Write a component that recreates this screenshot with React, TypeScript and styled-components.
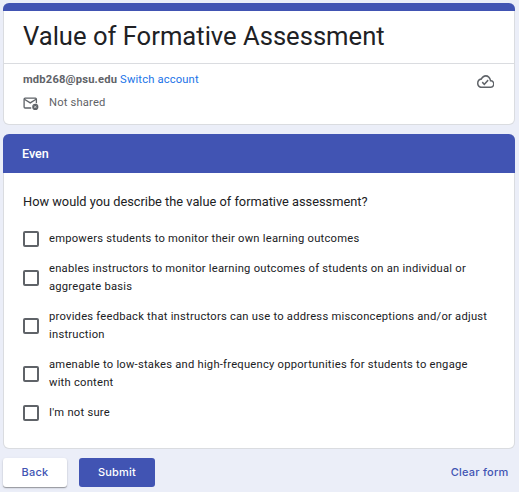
import React from "react";
import styled, { createGlobalStyle } from "styled-components";

const GlobalStyle = createGlobalStyle`
  * { box-sizing: border-box; }
  html, body { margin: 0; padding: 0; background: #ebeef8; }
  body { font-family: Roboto, "Liberation Sans", sans-serif; color: #202124; overflow: hidden; }
`;

const Page = styled.main`
  width: 519px;
  height: 492px;
  padding: 3px 4px 0 3px;
  display: flex;
  flex-direction: column;
  background: #ebeef8;
`;

const Card = styled.section<{ $height: number }>`
  height: ${(p) => p.$height}px;
  background: linear-gradient(#fff, #fff) padding-box, #dadce0 border-box;
  border: 1px solid transparent;
  border-top: 0;
  border-radius: 6px;
  flex: none;
`;

const Accent = styled.div`
  height: 8px;
  margin: 0 -1px;
  border-radius: 6px 6px 0 0;
  background: #4154b3;
`;

const Title = styled.h1`
  margin: 0;
  height: 53px;
  padding: 9px 0 0 19px;
  border-bottom: 1px solid #dadce0;
  font-size: 25.6px;
  font-weight: 400;
  line-height: 32px;
  white-space: nowrap;
`;

const Account = styled.div`
  display: flex;
  justify-content: space-between;
  padding: 7px 20px 0 19px;
  font-size: 11.2px;
  line-height: 18px;
  letter-spacing: 0.18px;
  color: #5f6368;
`;

const Email = styled.strong`
  font-weight: 700;
  letter-spacing: 0.17px;
`;

const Switch = styled.a`
  color: #1a73e8;
  letter-spacing: 0.16px;
`;

const Shared = styled.div`
  display: flex;
  align-items: center;
  gap: 10px;
  margin-top: 5px;
`;

const CloudSlot = styled.div`
  padding-top: 4px;
  display: flex;
  align-items: flex-start;
`;

const SectionHeader = styled.h2`
  margin: 0 -1px;
  height: 39px;
  padding: 1px 0 0 19px;
  border-radius: 6px 6px 0 0;
  background: #4154b3;
  color: #fff;
  font-size: 12.6px;
  font-weight: 500;
  line-height: 38px;
`;

const Question = styled.p`
  margin: 0;
  padding: 19px 0 18px 19px;
  font-size: 12.8px;
  line-height: 20px;
`;

const Options = styled.div`
  display: flex;
  flex-direction: column;
  gap: 12px;
  padding-left: 19px;
`;

const Option = styled.label`
  display: flex;
  align-items: center;
  gap: 10px;
  font-size: 11.2px;
  line-height: 18px;
  letter-spacing: 0.24px;
`;

const Checkbox = styled.input`
  appearance: none;
  flex: none;
  width: 16px;
  height: 16px;
  margin: 0;
  border: 2px solid #5f6368;
  border-radius: 2px;
`;

const OptionText = styled.span`
  width: 450px;
  white-space: pre-line;
`;

const Actions = styled.footer`
  display: flex;
  align-items: center;
  gap: 12px;
  margin-top: 9px;
`;

const Button = styled.button<{ $kind: "plain" | "primary" | "text" }>`
  height: 29px;
  width: ${(p) => (p.$kind === "plain" ? "64px" : p.$kind === "primary" ? "76px" : "auto")};
  margin-left: ${(p) => (p.$kind === "text" ? "auto" : 0)};
  padding: ${(p) => (p.$kind === "text" ? "0 6.5px 0 0" : 0)};
  border: 0;
  border-radius: 3px;
  background: ${(p) => (p.$kind === "plain" ? "#fff" : p.$kind === "primary" ? "#4154b3" : "transparent")};
  color: ${(p) => (p.$kind === "primary" ? "#fff" : "#4154b3")};
  box-shadow: ${(p) => (p.$kind === "plain" ? "0 1px 1px rgba(0,0,0,.32), 0 1px 3px rgba(0,0,0,.1)" : "none")};
  font: 500 11px/29px Inter, sans-serif;
  letter-spacing: 0.22px;
`;

const MailIcon = () => (
  <svg width="16" height="14" viewBox="0 0 16 14" fill="none" stroke="#5f6368" strokeWidth="1.3">
    <path d="M8.2 12H2.1c-.6 0-1-.4-1-1V3.2c0-.6.4-1 1-1h10.3c.6 0 1 .4 1 1v4.1" />
    <path d="M1.4 3.3 7.25 6.9 13.1 3.3" />
    <circle cx="12.3" cy="10.9" r="3.1" fill="#5f6368" stroke="none" />
    <path d="m11.1 9.7 2.4 2.4m0-2.4-2.4 2.4" stroke="#fff" strokeWidth=".6" />
  </svg>
);

const CloudIcon = () => (
  <svg width="17.5" height="13" viewBox="0 4 24 16" preserveAspectRatio="none" fill="#5f6368">
    <path d="M19.35 10.04C18.67 6.59 15.64 4 12 4 9.11 4 6.6 5.64 5.35 8.04 2.34 8.36 0 10.91 0 14c0 3.31 2.69 6 6 6h13c2.76 0 5-2.24 5-5 0-2.64-2.05-4.78-4.65-4.96zM19 18H6c-2.21 0-4-1.79-4-4 0-2.05 1.53-3.76 3.56-3.97l1.07-.11.5-.95C8.08 7.14 9.94 6 12 6c2.62 0 4.88 1.86 5.39 4.43l.3 1.5 1.53.11c1.56.1 2.78 1.41 2.78 2.96 0 1.65-1.35 3-3 3zm-9-3.82l-2.09-2.09L6.5 13.5 10 17l6.01-6.01-1.41-1.41z" />
  </svg>
);

const SectionCard = styled(Card)`
  margin-top: 9px;
`;

const options = [
  "empowers students to monitor their own learning outcomes",
  "enables instructors to monitor learning outcomes of students on an individual or\naggregate basis",
  "provides feedback that instructors can use to address misconceptions and/or adjust\ninstruction",
  "amenable to low-stakes and high-frequency opportunities for students to engage\nwith content",
  "I'm not sure",
];

export default function App() {
  return (
    <>
      <GlobalStyle />
      <Page>
        <Card $height={122}>
          <Accent />
          <Title>Value of Formative Assessment</Title>
          <Account>
            <div>
              <div>
                <Email>mdb268@psu.edu</Email> <Switch>Switch account</Switch>
              </div>
              <Shared>
                <MailIcon />
                <span>Not shared</span>
              </Shared>
            </div>
            <CloudSlot>
              <CloudIcon />
            </CloudSlot>
          </Account>
        </Card>
        <SectionCard $height={315}>
          <SectionHeader>Even</SectionHeader>
          <Question>How would you describe the value of formative assessment?</Question>
          <Options>
            {options.map((text) => (
              <Option key={text}>
                <Checkbox type="checkbox" />
                <OptionText>{text}</OptionText>
              </Option>
            ))}
          </Options>
        </SectionCard>
        <Actions>
          <Button $kind="plain">Back</Button>
          <Button $kind="primary">Submit</Button>
          <Button $kind="text">Clear form</Button>
        </Actions>
      </Page>
    </>
  );
}
